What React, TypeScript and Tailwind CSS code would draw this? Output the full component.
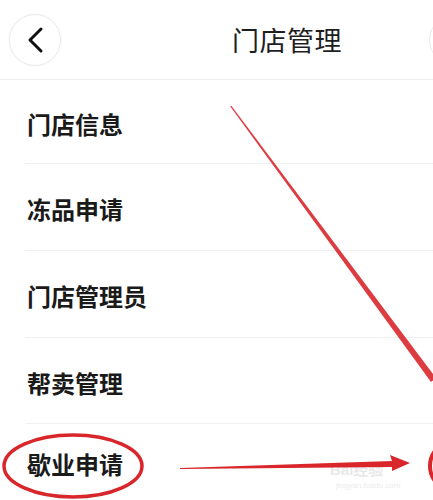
import React from "react";

const items = ["门店信息", "冻品申请", "门店管理员", "帮卖管理", "歇业申请"];
const heights = ["h-[84px]", "h-[87px]", "h-[87px]", "h-[86px]", "h-[76px]"];

export default function App() {
  return (
    <div
      className="relative w-[433px] h-[500px] overflow-hidden bg-white"
      style={{ fontFamily: '"Noto Sans CJK SC", "Noto Sans", sans-serif' }}
    >
      <div className="flex items-center h-[80px] border-b border-[#eeeeee]">
        <div className="ml-[9px] w-[52px] h-[52px] rounded-full border border-[#ececec] bg-white shadow-[0_0_3px_rgba(0,0,0,0.05)] flex items-center justify-center shrink-0">
          <svg width="18" height="28" viewBox="0 0 18 28">
            <path d="M15 3 L4 14 L15 25" fill="none" stroke="#111" strokeWidth="3" strokeLinecap="round" strokeLinejoin="round" />
          </svg>
        </div>
        <div className="ml-[171px] text-[27px] text-[#1e1e1e] leading-none font-normal tracking-[0.5px]">门店管理</div>
        <div className="ml-auto mr-[-48px] w-[52px] h-[52px] rounded-full border border-[#ececec] shrink-0" />
      </div>
      {items.map((t, i) => (
        <div key={t} className={`ml-[25px] ${heights[i]} flex items-center ${i < 4 ? "border-b border-[#f0f0f0]" : ""}`}>
          <span className="ml-[2px] mt-[4px] text-[24px] font-semibold text-[#1a1a1a] leading-none">{t}</span>
        </div>
      ))}
      <div className="absolute left-[330px] top-[462px] text-[15px] font-bold text-[#e8e8e8] leading-none" style={{ fontFamily: '"Liberation Sans", "Noto Sans CJK SC", sans-serif' }}>
        Bai经验
      </div>
      <div className="absolute left-[336px] top-[482px] text-[8px] text-[#ececec] leading-none" style={{ fontFamily: '"Liberation Sans", sans-serif' }}>
        jingyan.baidu.com
      </div>
      <svg className="absolute left-0 top-0" width="433" height="500" viewBox="0 0 433 500">
        <polygon points="230,106 231.5,106 436,378 431,382" fill="#d8262b" opacity="0.9" />
        <ellipse cx="73" cy="466" rx="69" ry="31" fill="none" stroke="#d8262b" strokeWidth="3.5" />
        <polygon points="180,468 392,461 390,455 410,463 392,471 392,467 180,469" fill="#d8262b" />
        <circle cx="455" cy="466" r="25" fill="none" stroke="#d8262b" strokeWidth="4" />
      </svg>
    </div>
  );
}
